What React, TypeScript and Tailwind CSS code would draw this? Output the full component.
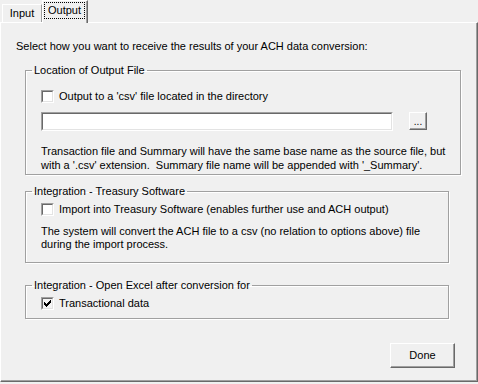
import React from "react";

function CheckBox({ checked = false }: { checked?: boolean }) {
  return (
    <div className="w-[13px] h-[13px] shrink-0 border border-t-[#a0a0a0] border-l-[#a0a0a0] border-r-white border-b-white">
      <div
        className={
          "w-full h-full border border-t-[#696969] border-l-[#696969] border-r-[#e3e3e3] border-b-[#e3e3e3] flex items-center justify-center " +
          (checked ? "bg-[#f4f4f4]" : "bg-white")
        }
      >
        {checked && (
          <svg width="7" height="7" viewBox="0 0 7 7" shapeRendering="crispEdges">
            <path d="M0 2h1v1h1v1h1V3h1V2h1V1h1V0h1v3H6v1H5v1H4v1H3v1H2V6H1V5H0z" fill="#000" />
          </svg>
        )}
      </div>
    </div>
  );
}

function Group({
  title,
  className,
  children,
}: {
  title: string;
  className: string;
  children: React.ReactNode;
}) {
  return (
    <fieldset
      className={
        "ml-[24px] w-[424px] border border-[#a0a0a0] shadow-[inset_1px_1px_0_#ffffff,1px_1px_0_#ffffff] " +
        className
      }
    >
      <legend className="ml-[6px] px-[2px] leading-[13px]">{title}</legend>
      {children}
    </fieldset>
  );
}

export default function App() {
  return (
    <div className="w-[478px] h-[384px] bg-[#f0f0f0] text-black text-[11px] leading-[13px] whitespace-nowrap font-['Liberation_Sans',Arial,sans-serif] overflow-hidden">
      {/* Tab strip */}
      <div className="relative z-10 flex items-end h-[22px] pl-[2px]">
        <div className="h-[18px] w-[40px] border-t border-l border-white border-r border-r-[#a0a0a0] flex items-center justify-center pb-[1px]">
          Input
        </div>
        <div className="-mb-px h-[23px] w-[46px] bg-[#f0f0f0] border-t border-l border-white border-r border-r-[#696969] shadow-[inset_-1px_0_0_#a0a0a0] pt-[1px] pl-[1px] pr-[2px]">
          <div className="h-[17px] border border-dotted border-black flex items-center justify-center">
            Output
          </div>
        </div>
      </div>

      {/* Panel */}
      <div className="h-[360px] w-[478px] border-t border-l border-white border-r border-b border-r-[#696969] border-b-[#696969] shadow-[inset_-1px_-1px_0_#a0a0a0] pt-[17px]">
        <p className="pl-[15px]">
          Select how you want to receive the results of your ACH data conversion:
        </p>

        <Group title="Location of Output File" className="mt-[11px] h-[111px]">
          <div className="px-[15px] pt-[13px]">
            <div className="flex items-center gap-[5px] h-[13px]">
              <CheckBox />
              <span>Output to a 'csv' file located in the directory</span>
            </div>
            <div className="flex items-start mt-[9px] gap-[16px]">
              <div className="w-[352px] h-[19px] bg-white border border-t-[#a0a0a0] border-l-[#a0a0a0] border-r-white border-b-white">
                <div className="w-full h-full border border-t-[#696969] border-l-[#696969] border-r-[#e3e3e3] border-b-[#e3e3e3]" />
              </div>
              <div className="w-[18px] h-[18px] border border-t-white border-l-white border-r-[#696969] border-b-[#696969] shadow-[inset_-1px_-1px_0_#a0a0a0] flex items-end justify-center pb-[3px] text-[10px] leading-[8px]">
                ...
              </div>
            </div>
            <p className="mt-[13px] leading-[14px]">
              Transaction file and Summary will have the same base name as the source file, but
              <br />
              with a '.csv' extension.&nbsp; Summary file name will be appended with '_Summary'.
            </p>
          </div>
        </Group>

        <Group title="Integration - Treasury Software" className="mt-[10px] h-[78px]">
          <div className="px-[15px] pt-[5px]">
            <div className="flex items-center gap-[5px] h-[13px]">
              <CheckBox />
              <span>Import into Treasury Software (enables further use and ACH output)</span>
            </div>
            <p className="mt-[9px] leading-[13px]">
              The system will convert the ACH file to a csv (no relation to options above) file
              <br />
              during the import process.
            </p>
          </div>
        </Group>

        <Group title="Integration - Open Excel after conversion for" className="mt-[16px] h-[40px]">
          <div className="px-[15px] pt-[5px]">
            <div className="flex items-center gap-[5px] h-[13px]">
              <CheckBox checked />
              <span>Transactional data</span>
            </div>
          </div>
        </Group>

        <div className="flex justify-end pr-[22px] mt-[24px]">
          <button className="w-[65px] h-[25px] border border-t-white border-l-white border-r-[#696969] border-b-[#696969] shadow-[inset_-1px_-1px_0_#a0a0a0] bg-[#f0f0f0] text-[11px] leading-[13px]">
            Done
          </button>
        </div>
      </div>
    </div>
  );
}
